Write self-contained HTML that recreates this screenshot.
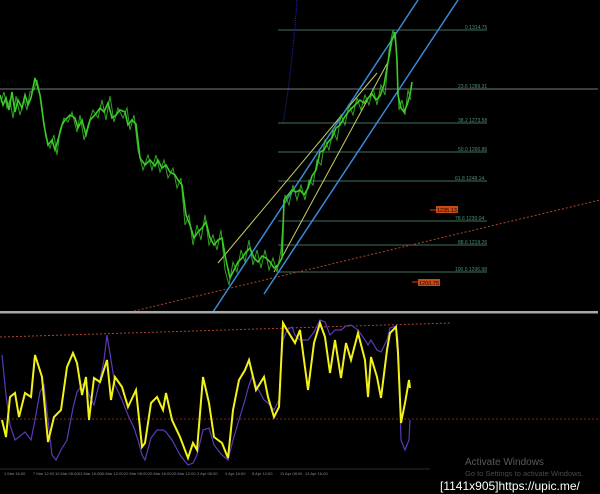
<!DOCTYPE html>
<html><head><style>
html,body{margin:0;padding:0;background:#000;width:600px;height:494px;overflow:hidden}
svg{display:block}
text{font-family:"Liberation Sans",sans-serif}
</style></head><body>
<svg width="600" height="494" viewBox="0 0 600 494" xmlns="http://www.w3.org/2000/svg">
<rect width="600" height="494" fill="#000"/>
<g stroke="#3f6f5c" stroke-width="1">
<line x1="278" y1="30" x2="487" y2="30"/>
<line x1="278" y1="123" x2="487" y2="123"/>
<line x1="278" y1="152" x2="487" y2="152"/>
<line x1="278" y1="181" x2="487" y2="181"/>
<line x1="278" y1="221" x2="487" y2="221"/>
<line x1="278" y1="245" x2="487" y2="245"/>
<line x1="278" y1="272" x2="487" y2="272"/>
</g>
<line x1="0" y1="89" x2="598" y2="89" stroke="#6e7e76" stroke-width="1"/>
<g fill="#4f8f70" font-size="5">
<text x="465" y="29">0 1314.75</text>
<text x="458" y="88">23.6 1289.31</text>
<text x="458" y="122">38.2 1273.58</text>
<text x="458" y="151">50.0 1260.86</text>
<text x="455" y="180">61.8 1248.14</text>
<text x="455" y="220">78.6 1230.04</text>
<text x="458" y="244">88.6 1219.26</text>
<text x="455" y="271">100.0 1206.98</text>
</g>
<line x1="130" y1="312" x2="600" y2="200" stroke="#b0452a" stroke-width="1" stroke-dasharray="2,2"/>
<path d="M283,124 Q292,70 297,0" stroke="#2a2a8a" stroke-width="1" fill="none" stroke-dasharray="1,1"/>
<line x1="218" y1="263" x2="377" y2="73" stroke="#c8d060" stroke-width="1"/>
<line x1="274" y1="272" x2="388" y2="62" stroke="#c8d060" stroke-width="1"/>
<line x1="213" y1="312" x2="418" y2="0" stroke="#3a8ad8" stroke-width="1.5"/>
<line x1="264" y1="294" x2="458" y2="0" stroke="#3a8ad8" stroke-width="1.5"/>
<g fill="none" stroke="#3ccc2a">
<polyline stroke-width="1.6" points="0,95 3,105 6,98 9,110 12,92 15,112 18,100 22,108 25,95 28,105 31,98 35,78 38,88 40,95 44,125 48,145 52,140 55,150 58,140 62,125 65,120 70,115 75,118 78,128 82,120 86,135 90,120 95,115 100,108 104,112 108,103 112,118 116,115 120,110 125,112 128,125 132,120 136,124 140,158 145,165 150,160 155,166 158,160 162,168 166,165 170,172 175,175 178,180 182,185 186,215 190,225 194,238 198,232 202,228 206,222 210,238 214,245 218,240 222,238 226,260 230,278 234,270 238,262 242,258 246,252 250,248 254,258 258,262 262,256 266,258 270,262 274,268 278,265 282,258 284,200 288,195 292,190 296,192 300,190 304,195 308,188 312,176 316,170 320,152 324,150 328,142 332,138 336,128 340,125 344,118 348,112 352,108 356,104 360,100 364,103 368,98 372,94 376,100 380,96 384,85 388,62 392,40 395,32 397,60 398,95 401,108 404,112 407,105 410,95 412,82"/>
<polyline stroke-width="1" opacity="0.8" points="1,102 4,92 7,108 10,100 13,118 16,96 20,115 24,100 27,110 30,92 34,90 37,80 41,100 46,138 50,148 54,135 57,155 60,130 64,118 68,122 72,112 77,132 80,115 84,140 88,125 93,110 98,118 102,100 106,120 110,96 114,122 118,108 123,118 127,108 130,130 134,115 138,150 143,170 148,155 152,170 156,155 160,172 164,160 168,178 173,168 177,188 181,178 185,225 189,215 193,245 197,225 201,240 205,215 209,245 213,235 217,250 221,230 225,270 229,285 233,262 237,272 241,250 245,262 249,240 253,265 257,250 261,268 265,250 269,270 273,258 277,272 281,250 285,195 289,205 293,185 297,200 301,185 305,200 309,180 313,185 317,160 321,165 325,140 329,150 333,130 337,140 341,115 345,125 349,105 353,115 357,98 361,110 365,95 369,105 373,88 377,105 381,85 385,95 389,50 393,30 396,45 399,110 402,100 405,115 408,90 411,100"/>
</g>
<rect x="436" y="206" width="22" height="7" fill="#c84a14"/>
<text x="437" y="212" font-size="5.5" fill="#200">1235.13</text>
<line x1="430" y1="210" x2="436" y2="210" stroke="#c84a14"/>
<rect x="418" y="279" width="22" height="7" fill="#c84a14"/>
<text x="419" y="285" font-size="5.5" fill="#200">1203.75</text>
<line x1="412" y1="282" x2="418" y2="282" stroke="#c84a14"/>
<rect x="0" y="311" width="598" height="2.5" fill="#a8a8a8"/>
<line x1="0" y1="337" x2="450" y2="323" stroke="#b0452a" stroke-width="1" stroke-dasharray="2,2"/>
<line x1="0" y1="419" x2="600" y2="419" stroke="#7a2a1a" stroke-width="1" stroke-dasharray="2,2"/>
<polyline fill="none" stroke="#5a3ab8" stroke-width="1.2" points="2,355 6,395 10,425 15,440 19,437 25,432 31,440 35,420 40,392 44,385 48,420 52,455 56,460 61,450 67,440 73,408 77,392 82,385 86,382 89,395 94,405 100,380 104,360 107,335 111,360 115,385 122,400 128,415 134,428 138,440 142,455 145,460 151,438 157,430 163,430 166,432 172,440 180,455 188,465 193,463 197,455 203,430 209,428 214,445 222,455 228,460 233,440 239,420 245,400 249,385 253,375 256,385 264,400 268,403 274,410 279,400 283,340 287,330 292,327 295,335 300,340 304,340 308,340 314,332 320,320 325,322 330,335 335,330 341,330 346,326 351,325 358,330 365,340 368,345 371,340 377,350 381,352 387,340 390,328 396,326 398,340 401,440 405,450 409,440 410,420"/>
<polyline fill="none" stroke="#f2f21a" stroke-width="2" points="2,420 6,437 10,397 15,393 19,417 25,393 31,397 35,355 42,377 48,442 54,417 61,410 67,367 73,353 77,363 82,395 86,377 89,420 94,378 100,382 107,360 111,400 115,377 122,387 128,407 136,390 142,447 145,443 151,403 157,397 163,410 166,393 172,420 180,437 188,458 193,443 197,450 203,377 209,403 214,437 222,443 228,458 233,410 239,380 245,370 249,360 253,377 256,390 264,377 268,397 274,417 279,407 283,323 287,330 295,343 300,330 304,360 308,390 314,343 320,323 325,337 330,373 335,340 341,378 346,343 351,360 358,333 365,360 368,397 371,357 377,377 381,398 387,350 390,333 396,327 398,353 401,423 405,403 409,380 410,388"/>
<line x1="0" y1="469" x2="430" y2="469" stroke="#555" stroke-width="0.5"/>
<g fill="#8a8a8a" font-size="4">
<text x="4" y="475">1 Mar 16:00</text><text x="33" y="475">7 Mar 12:00</text><text x="55" y="475">10 Mar 08:00</text><text x="78" y="475">12 Mar 16:00</text><text x="100" y="475">16 Mar 12:00</text><text x="124" y="475">22 Mar 08:00</text><text x="148" y="475">25 Mar 16:00</text><text x="172" y="475">28 Mar 12:00</text><text x="197" y="475">3 Apr 08:00</text><text x="225" y="475">4 Apr 16:00</text><text x="252" y="475">8 Apr 12:00</text><text x="280" y="475">11 Apr 08:00</text><text x="305" y="475">13 Apr 16:00</text>
</g>
<text x="465" y="465" font-size="10" fill="#5a5a5a">Activate Windows</text>
<text x="465" y="476" font-size="7.5" fill="#4a4a4a">Go to Settings to activate Windows.</text>
<rect x="436" y="477" width="164" height="17" fill="#000"/>
<text x="440" y="490" font-size="12" fill="#fff">[1141x905]https://upic.me/</text>
</svg>
</body></html>
